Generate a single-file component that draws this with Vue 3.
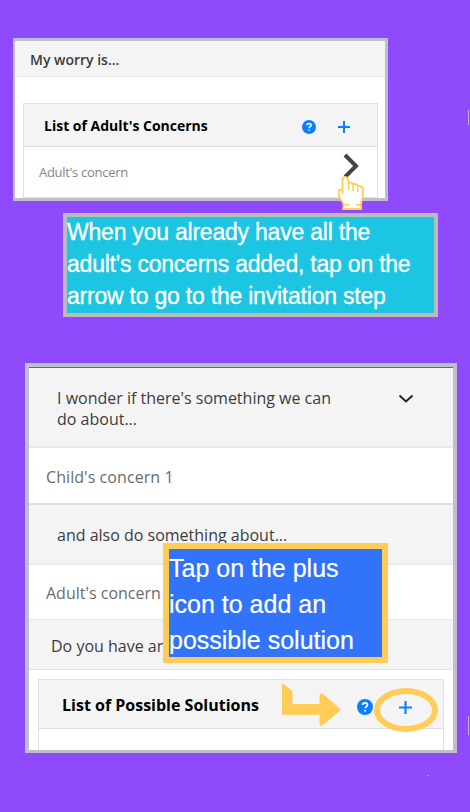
<script setup>
const childConcern = "Child's concern 1"
const adultConcern = "Adult's concern"
</script>

<template>
  <main class="page">
    <section class="card worry">
      <header class="bar worry-head"><span class="t-worry">My worry is...</span></header>
      <div class="table worry-table">
        <div class="table-head">
          <strong class="t-adults">List of Adult's Concerns</strong>
          <svg class="help small" viewBox="0 0 16 16">
            <circle cx="8" cy="8" r="8" />
            <path d="M5.7 6.1C5.7 4.7 6.7 3.9 8 3.9s2.4.8 2.4 2.1c0 1.6-2.2 1.7-2.2 3.3M8.1 10.9v1.5" />
          </svg>
          <svg class="plus small-plus" viewBox="0 0 14 14"><path d="M7 0v14M0 7h14" /></svg>
        </div>
        <div class="table-row">
          <span class="t-row">{{ adultConcern }}</span>
          <svg class="next" viewBox="0 0 16 26"><path d="M2 2l11 11L2 24" /></svg>
        </div>
      </div>
      <svg class="hand" viewBox="0 0 28 36">
        <path d="M5.500 19V5C5.500 .9 10.500 .9 11 4.800L11.500 8.500C13.500 6.800 15.700 7.500 16 9.500 18 8.400 20.300 9.200 20.700 11.200 23.500 10.200 26 11.700 26 14.500V20C26 23 24 25.500 24 29.500L24.300 34H6L6.500 29.500C6 27 3 24 2.200 21.500 1.500 19 1.500 17 2 15.500 3 14 5.500 15 5.500 17.500" />
        <path class="thin" d="M11.500 8.500V15M16 9.500V16M20.700 11.200V17M6.500 29.700h5.500M19 29.700h5" />
      </svg>
    </section>

    <p class="banner"><span>When you already have all the<br />adult's concerns added, tap on the<br />arrow to go to the invitation step</span></p>

    <section class="card solutions">
      <header class="bar wonder">
        <span class="t-wonder">I wonder if there's something we can<br />do about...</span>
        <svg class="chevron" viewBox="0 0 16 10"><path d="M1.500 1.500L8 7.500l6.500-6" /></svg>
      </header>
      <div class="row child"><span class="t-child">{{ childConcern }}</span></div>
      <div class="bar also"><span class="t-also">and also do something about...</span></div>
      <div class="row adult"><span class="t-adult">{{ adultConcern }}</span></div>
      <div class="bar ideas"><span class="t-ideas">Do you have an</span></div>
      <div class="table solution-table">
        <div class="table-head">
          <strong class="t-solutions">List of Possible Solutions</strong>
          <svg class="help" viewBox="0 0 16 16">
            <circle cx="8" cy="8" r="8" />
            <path d="M5.700 6.100C5.700 4.700 6.700 3.900 8 3.900s2.400.8 2.400 2.100c0 1.600-2.200 1.700-2.200 3.300M8.100 10.900v1.500" />
          </svg>
          <svg class="plus" viewBox="0 0 14 14"><path d="M7 0v14M0 7h14" /></svg>
        </div>
      </div>
      <p class="callout">Tap on the plus<br />icon to add an<br />possible solution</p>
      <svg class="arrow" viewBox="0 0 60 44">
        <path d="M1.500 2L11 9V22.500H39V13Q39 11.500 41.500 12L59.500 27.700 41.500 43Q39 44 39 42V32.300H1.500z" />
      </svg>
      <i class="ring"></i>
    </section>
    <i class="tick upper"></i>
    <i class="tick lower"></i>
    <i class="dash"></i>
  </main>
</template>

<style>
body { margin: 0; background: #8f4afc; }
</style>

<style scoped>
* { box-sizing: border-box; }
.page {
  position: relative;
  width: 470px;
  height: 812px;
  padding-top: 38px;
  overflow: hidden;
  background: #8f4afc;
  font-family: "Open Sans", "Noto Sans", sans-serif;
}
span, strong { white-space: nowrap; }
svg { display: block; fill: none; flex: none; }
p { margin: 0; }
.card { position: relative; background: #fff; border: solid #bcc0cb; }
.bar { background: #f4f4f4; display: flex; align-items: center; }
.row { display: flex; align-items: center; background: #fff; }
.table { border: 1px solid #e1e1e1; }
.table-head { display: flex; align-items: center; background: #f4f4f4; border-bottom: 1px solid #dedede; }
.worry { margin-left: 13px; width: 375px; height: 163px; border-width: 3px 3px 3px 2px; }
.worry-head { height: 36px; padding: 2px 0 0 15px; border-bottom: 1px solid #e5e5e5; }
.worry-table { margin: 26px 7px 0 8px; height: 95px; }
.worry-table .table-head { height: 43px; padding-left: 20px; }
.table-row { height: 50px; padding-left: 15px; display: flex; align-items: center; }
.t-worry { font-size: 14px; font-weight: 600; color: #3c3c3c; }
.t-adults { font-size: 14px; font-weight: 700; color: #000; width: 164px; }
.t-row { font-size: 13px; letter-spacing: -0.3px; color: #858585; width: 304px; }
.next { width: 16px; height: 26px; margin-top: -13px; stroke: #444; stroke-width: 4; }
.help { width: 16px; height: 16px; }
.help circle { fill: #0a80ff; }
.help path { stroke: #fff; stroke-width: 1.8; }
.small { width: 14px; height: 14px; margin: 4px 0 0 94px; }
.plus { width: 13px; height: 13px; stroke: #0a80ff; stroke-width: 2.3; }
.small-plus { width: 12px; height: 12px; margin: 4px 0 0 22px; }
.hand { position: absolute; left: 322px; top: 134px; width: 28px; height: 36px; fill: #fff; stroke: #ffcd57; stroke-width: 1.8; stroke-linejoin: round; }
.hand .thin { fill: none; stroke-width: 1.5; }
.banner {
  display: flex;
  align-items: center;
  margin: 12px 0 0 63px;
  width: 375px;
  height: 104px;
  padding-bottom: 2px;
  border: 4px solid #bbb;
  background: #1cc5e1;
  color: #fff;
  font: 23px/32px "Liberation Sans", Arial, sans-serif;
  letter-spacing: -0.22px;
  -webkit-text-stroke: 0.3px #fff;
}
.solutions { margin: 46px 0 0 25px; width: 432px; height: 390px; border-width: 4px 4px 3px; }
.wonder { height: 81px; padding: 3px 0 0 28px; border-top: 1px solid #0876ff; border-bottom: 2px solid #e8e8e8; }
.t-wonder { width: 341px; font-size: 16px; line-height: 21px; color: #3c3c3c; }
.wonder .chevron { width: 16px; height: 10px; align-self: flex-start; margin-top: 23px; stroke: #222; stroke-width: 2; }
.child { height: 57px; padding: 2px 0 0 17px; border-bottom: 2px solid #dedede; }
.also { height: 60px; padding: 2px 0 0 28px; border-bottom: 2px solid #ebebeb; }
.adult { height: 55px; padding: 2px 0 0 17px; border-bottom: 1px solid #e5e5e5; }
.ideas { height: 50px; padding: 2px 0 0 22px; border-bottom: 1px solid #e5e5e5; }
.t-child, .t-adult { font-size: 16px; color: #6c6c6c; }
.t-child { letter-spacing: 0.07px; }
.t-also, .t-ideas { font-size: 16px; color: #3c3c3c; }
.solution-table { margin: 9px 9px 0; height: 71px; border-bottom: 0; }
.solution-table .table-head { height: 49px; padding: 2px 0 0 23px; }
.t-solutions { width: 295px; font-size: 16px; font-weight: 700; color: #000; }
.solution-table .help { margin-top: 3px; }
.solution-table .plus { margin: 4px 0 0 26px; }
.callout {
  position: absolute;
  left: 134px;
  top: 176px;
  width: 225px;
  height: 120px;
  padding-top: 1px;
  border: 6px solid #ffcd57;
  background: #3173f9;
  color: #fff;
  font: 25px/36px "Liberation Sans", Arial, sans-serif;
  white-space: nowrap;
  -webkit-text-stroke: 0.2px #fff;
}
.arrow { position: absolute; left: 252px; top: 315px; width: 60px; height: 44px; fill: #ffcd57; stroke: #ffcd57; stroke-linejoin: round; }
.ring { position: absolute; left: 345px; top: 321px; width: 64px; height: 44px; border: 6px solid #ffcd57; border-radius: 50%; }
.tick { position: absolute; left: 468px; width: 1px; background: #c4a8ee; }
.upper { top: 110px; height: 15px; }
.lower { top: 716px; height: 19px; }
.dash { position: absolute; left: 427px; top: 775px; width: 2px; height: 1px; background: #b491f5; }
</style>
